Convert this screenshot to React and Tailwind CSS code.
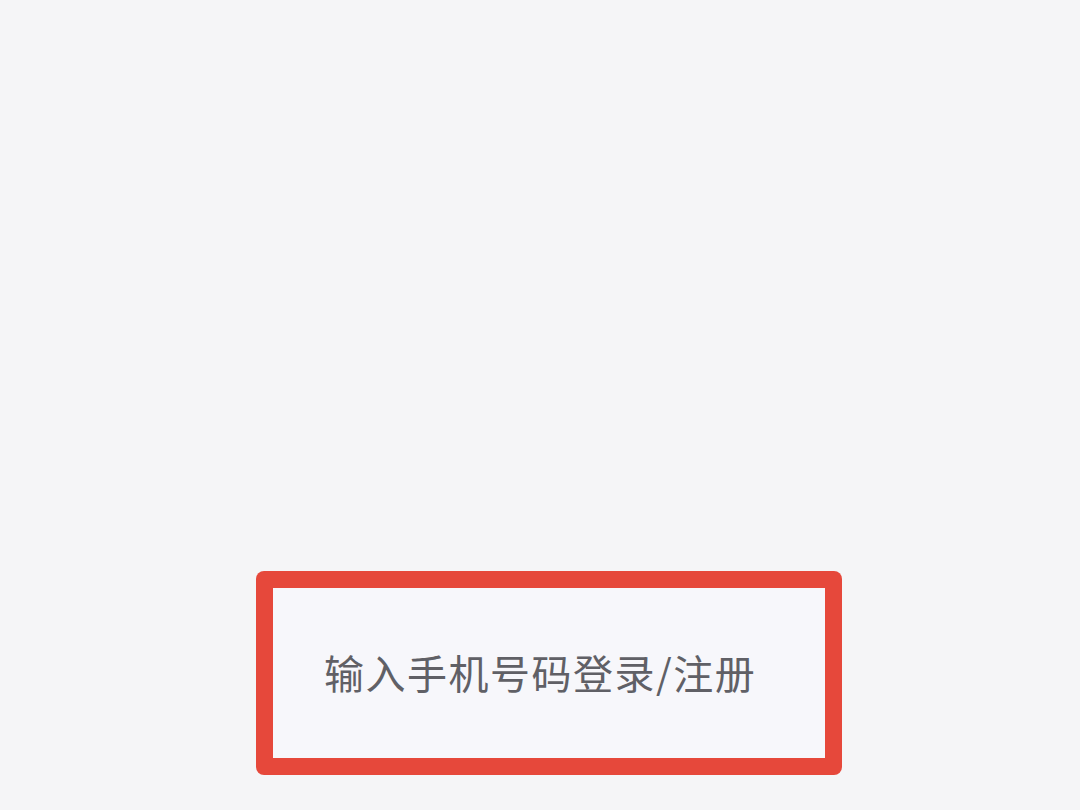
export default function App() {
  return (
    <div className="w-[1080px] h-[810px] bg-[#f5f5f7] pt-[571px] pl-[256px] overflow-hidden">
      <div className="w-[586px] h-[204px] rounded-[8px] bg-[#e6483b] p-[17px]">
        <div className="w-full h-full bg-[#f7f7fb] flex items-center pl-[51px] pb-[2px]">
          <span
            className="text-[40px] leading-none tracking-[1.5px] text-[#606066] font-normal"
            style={{ fontFamily: '"Noto Sans CJK SC", "Noto Sans", sans-serif' }}
          >
            输入手机号码登录/注册
          </span>
        </div>
      </div>
    </div>
  );
}
